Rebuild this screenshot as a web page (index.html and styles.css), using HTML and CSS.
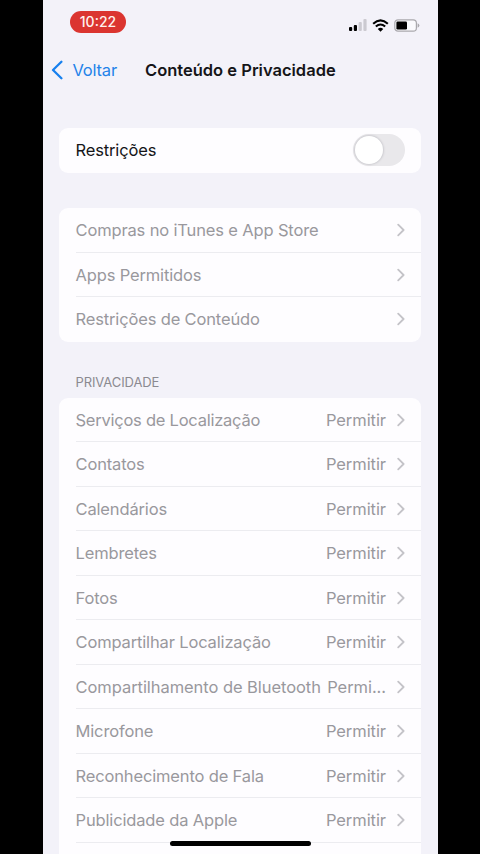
FILE: index.html
```html
<!DOCTYPE html>
<html lang="pt-BR">
<head>
<meta charset="utf-8">
<title>Conteúdo e Privacidade</title>
<link rel="stylesheet" href="styles.css">
</head>
<body>
<svg class="defs" aria-hidden="true"><symbol id="chevron" viewBox="0 0 8 14"><path d="M1.2 1.7 6.6 7 1.2 12.3"/></symbol></svg>
<main class="phone">
  <header class="status">
    <span class="time">10:22</span>
    <div class="indicators">
      <svg class="signal" viewBox="0 0 18 12"><rect x="0" y="8" width="3.2" height="4" rx="1"/><rect x="4.8" y="6" width="3.2" height="6" rx="1"/><g class="faint"><rect x="9.6" y="3" width="3.2" height="9" rx="1"/><rect x="14.4" y="0" width="3.2" height="12" rx="1"/></g></svg>
      <svg class="wifi" viewBox="0 0 16 12"><path d="M1.1 4.3Q8-2 14.9 4.3M3.6 7Q8 3.1 12.4 7"/><path class="dot" d="M5.4 9.2Q8 7 10.6 9.2L8 11.8Z"/></svg>
      <svg class="battery" viewBox="0 0 26 13"><rect class="case" x=".8" y=".8" width="21.6" height="11.4" rx="3.2"/><rect x="2.4" y="2.4" width="10.6" height="8.2" rx="1.3"/><path class="tip" d="M23.6 4.2Q25.4 5 25.4 6.5T23.6 8.8Z"/></svg>
    </div>
  </header>
  <nav class="nav">
    <a class="back"><svg viewBox="0 0 12 20"><path d="M10.4 1.7 2 10l8.4 8.3"/></svg><span>Voltar</span></a>
    <h1>Conteúdo e Privacidade</h1>
  </nav>
  <section class="card main-toggle"><div class="row"><span class="label">Restrições</span><span class="switch"></span></div></section>
  <section class="card disabled">
    <div class="row"><span class="label">Compras no iTunes e App Store</span><svg class="chev"><use href="#chevron"/></svg></div>
    <div class="row"><span class="label">Apps Permitidos</span><svg class="chev"><use href="#chevron"/></svg></div>
    <div class="row"><span class="label">Restrições de Conteúdo</span><svg class="chev"><use href="#chevron"/></svg></div>
  </section>
  <h2>PRIVACIDADE</h2>
  <section class="card disabled">
    <div class="row"><span class="label snug">Serviços de Localização</span><span class="value">Permitir</span><svg class="chev"><use href="#chevron"/></svg></div>
    <div class="row"><span class="label">Contatos</span><span class="value">Permitir</span><svg class="chev"><use href="#chevron"/></svg></div>
    <div class="row"><span class="label">Calendários</span><span class="value">Permitir</span><svg class="chev"><use href="#chevron"/></svg></div>
    <div class="row"><span class="label">Lembretes</span><span class="value">Permitir</span><svg class="chev"><use href="#chevron"/></svg></div>
    <div class="row"><span class="label">Fotos</span><span class="value">Permitir</span><svg class="chev"><use href="#chevron"/></svg></div>
    <div class="row"><span class="label">Compartilhar Localização</span><span class="value">Permitir</span><svg class="chev"><use href="#chevron"/></svg></div>
    <div class="row"><span class="label wide">Compartilhamento de Bluetooth</span><span class="value">Permi...</span><svg class="chev"><use href="#chevron"/></svg></div>
    <div class="row"><span class="label">Microfone</span><span class="value">Permitir</span><svg class="chev"><use href="#chevron"/></svg></div>
    <div class="row"><span class="label">Reconhecimento de Fala</span><span class="value">Permitir</span><svg class="chev"><use href="#chevron"/></svg></div>
    <div class="row"><span class="label">Publicidade da Apple</span><span class="value">Permitir</span><svg class="chev"><use href="#chevron"/></svg></div>
    <div class="row"></div>
  </section>
  <div class="home"></div>
</main>
</body>
</html>
```

FILE: styles.css
```css
* { box-sizing: border-box; }
body { margin: 0; height: 854px; overflow: hidden; background: #000; font-family: Inter, "Liberation Sans", sans-serif; }
.defs { position: absolute; width: 0; height: 0; }
.phone { position: relative; width: 395px; height: 854px; margin-left: 42.5px; padding: 0 16.5px; overflow: hidden; background: #f3f2f9; color: #151518; }
.status { display: flex; justify-content: space-between; align-items: flex-start; height: 50px; padding: 11px 1.5px 0 11px; }
.time { width: 56px; height: 22px; border-radius: 11px; background: #db3530; color: #fff1ee; font-size: 14px; font-weight: 500; line-height: 22px; text-align: center; }
.indicators { display: flex; align-items: center; height: 14px; margin-top: 7px; }
.signal { width: 18px; height: 12px; margin-right: 5px; }
.faint { fill: #cbcad1; }
.wifi { width: 17px; height: 13px; margin-right: 5px; }
.wifi path { fill: none; stroke: #000; stroke-width: 2; }
.wifi .dot { fill: #000; stroke: none; }
.battery { width: 26px; height: 13px; }
.battery .case { fill: #fafafd; stroke: #a9a8ad; stroke-width: 1.2; }
.battery .tip { fill: #a9a8ad; }
.nav { display: grid; grid-template-columns: 86px 1fr; align-items: center; height: 40px; margin-left: -8px; }
.back { display: flex; align-items: center; gap: 9.5px; color: #2383e9; font-size: 16.5px; letter-spacing: -.2px; }
.back svg { width: 12px; height: 20px; }
.back path { fill: none; stroke: #1780ee; stroke-width: 2.3; stroke-linecap: round; stroke-linejoin: round; }
h1 { margin: 0 0 0 8px; font-size: 16.5px; font-weight: 600; letter-spacing: 0; white-space: nowrap; }
.card { width: 362px; border-radius: 9px; background: #fefdff; overflow: hidden; }
.main-toggle { margin: 38px 0 35.5px; }
.row { position: relative; display: flex; align-items: center; height: 44.5px; padding: 0 16.5px; font-size: 16.5px; letter-spacing: -.15px; white-space: nowrap; }
.row + .row::before { content: ""; position: absolute; top: -1px; left: 16.5px; right: 0; height: 1px; background: #ececf0; }
.label { margin-right: auto; }
.snug { letter-spacing: -.24px; }
.wide { letter-spacing: -.06px; }
.disabled { color: #99989d; }
.value { margin-right: 10.5px; letter-spacing: -.06px; }
.chev { width: 8px; height: 14px; fill: none; stroke: #c4c3c8; stroke-width: 1.8; stroke-linecap: round; stroke-linejoin: round; }
.switch { width: 52px; height: 32px; border-radius: 16px; background: #e9e8eb; }
.switch::before { content: ""; display: block; width: 28px; height: 28px; margin: 2px; border-radius: 50%; background: #fff; box-shadow: 0 0 2px 1px #cccbd0; }
h2 { height: 56px; margin: 0; padding: 31px 0 0 16.5px; color: #8b8a90; font-size: 13px; font-weight: 400; line-height: 18px; letter-spacing: -.1px; }
.home { position: absolute; left: 127px; bottom: 8px; width: 141px; height: 5px; border-radius: 3px; background: #000; }
```
